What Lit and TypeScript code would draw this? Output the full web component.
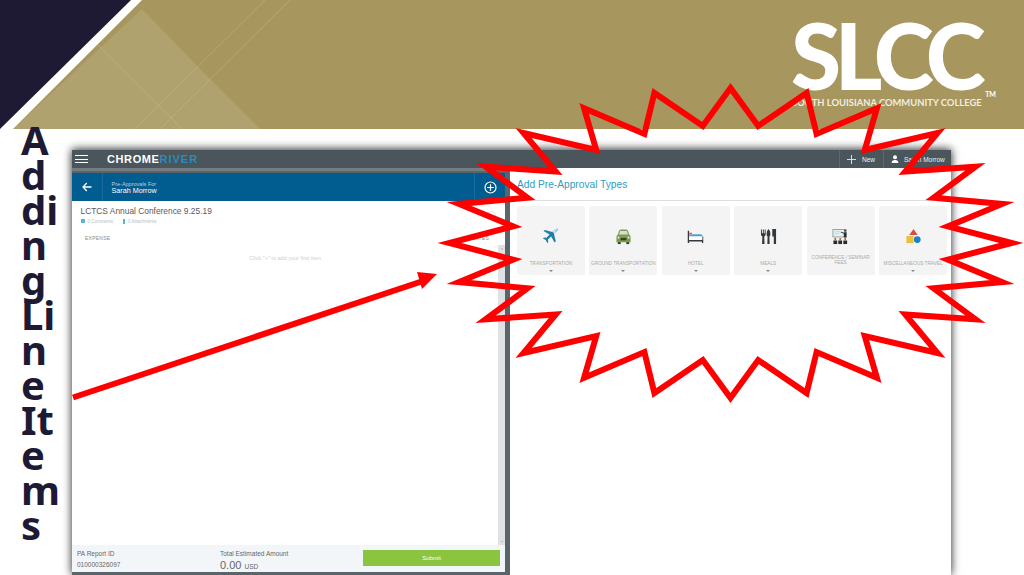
import { LitElement, html, css, svg } from "lit";
import { customElement } from "lit/decorators.js";

const QUARTER: [number, number][] = [
  [0, -160], [27, -113], [78, -155], [84, -105], [151, -140], [130, -89], [215, -115],
  [168, -68], [255, -80], [195, -43], [284, -41], [208, -16], [293, 0],
];

function norm(x: number, y: number): [number, number] {
  const l = Math.hypot(x, y) || 1;
  return [x / l, y / l];
}

function starPoints(): string {
  const cx = 730.5, cy = 243;
  const right = [...QUARTER, ...QUARTER.slice(0, -1).reverse().map(([x, y]) => [x, -y] as [number, number])];
  const left = right.slice(1, -1).reverse().map(([x, y]) => [-x, y] as [number, number]);
  const pts = [...right, ...left].map(([x, y]) => [x + cx, y + cy]);
  const half = 3;
  let cur = pts.map((p) => [...p]);
  for (let k = 0; k < 8; k++) {
    cur = pts.map((p, i) => {
      const c = cur[i];
      const a = cur[(i - 1 + cur.length) % cur.length];
      const b = cur[(i + 1) % cur.length];
      const ua = norm(a[0] - c[0], a[1] - c[1]);
      const ub = norm(b[0] - c[0], b[1] - c[1]);
      const bis = norm(ua[0] + ub[0], ua[1] + ub[1]);
      const cos = ua[0] * ub[0] + ua[1] * ub[1];
      const d = half / Math.sqrt((1 - cos) / 2);
      return [p[0] + bis[0] * d, p[1] + bis[1] * d];
    });
  }
  return cur.map((p) => `${p[0].toFixed(1)},${p[1].toFixed(1)}`).join(" ");
}

const plane = svg`<svg viewBox="0 0 18 18" width="17" height="17">
  <path d="M17 1.2c-1-.8-2.600-.3-3.600.7L11 4.200 3 2 1.600 3.200 8 7 4.800 10.300 2 10 1 11l3 1.600L5.600 16l1-1-.3-2.800L9.700 9l3.600 6.400 1.300-1.300-2-8 2.600-2.600c.9-1 1.800-1.600 1.800-2.300z" fill="#1f7fa8"/>
  <path d="M17 1.200c-.9-.7-2.500-.3-3.600.7L11 4.200l2.600 2 1-3.100z" fill="#cfe3ec"/></svg>`;
const car = svg`<svg viewBox="0 0 18 18" width="17" height="17">
  <rect x="3" y="14" width="3" height="3" fill="#333"/><rect x="12" y="14" width="3" height="3" fill="#333"/>
  <path d="M4 3.500Q4.500 1.500 6.500 1.500h5q2 0 2.500 2l1 3.500q1.500.7 1.500 2.500v5.500H1.500V9.500q0-1.800 1.500-2.500z" fill="#7f9c55"/>
  <path d="M5.200 3.300h7.600l.9 3.500H4.300z" fill="#d4e0d0"/><rect x="6" y="10.500" width="6" height="2.500" fill="#39421f"/>
  <circle cx="3.700" cy="10" r="1" fill="#f3f0d0"/><circle cx="14.300" cy="10" r="1" fill="#f3f0d0"/></svg>`;
const bed = svg`<svg viewBox="0 0 18 18" width="17" height="17">
  <path d="M1.500 3v13M16.500 9v7M1.500 13.500h15" stroke="#33393d" stroke-width="1.400" fill="none"/>
  <rect x="2.300" y="5" width="3" height="2" fill="#e0604c"/>
  <path d="M5 6.500h9.500q2 0 2 2.500H2.300V7.500H5z" fill="#4aa0d8"/><rect x="2.300" y="9" width="14" height="3.600" fill="#fff"/></svg>`;
const meal = svg`<svg viewBox="0 0 18 18" width="17" height="17" fill="#33393d">
  <path d="M1 1.500v5q0 2 1.500 2.500l-.3 8h2.600l-.3-8Q6 8.500 6 6.500v-5H5v4H4v-4H3v4H2v-4z"/>
  <path d="M9 1q2 1.500 2 5 0 2.500-1 3l.2 8H7.800L8 9q-1-.500-1-3 0-3.500 2-5z"/>
  <path d="M13 1h4v16h-2.400V9H13z"/></svg>`;
const conf = svg`<svg viewBox="0 0 18 18" width="17" height="17">
  <rect x="1" y="1.500" width="14" height="8" fill="#e6f1f1" stroke="#7d8c8c" stroke-width=".8"/>
  <path d="M3 4h6M3 6h4" stroke="#b7c6c6" stroke-width=".7"/>
  <circle cx="13.800" cy="3" r="1.100" fill="#3a2a20"/><path d="M12.500 4.500h2.800V10h-2.800zM12.500 5L9.500 4l-.2.700 3.200 1.300z" fill="#2b2b2b"/>
  <g fill="#2b2b2b"><circle cx="3.500" cy="11.700" r="1.100" fill="#a0623a"/><path d="M1.500 13.200h4V17h-4z"/>
  <circle cx="8.700" cy="11.700" r="1.100" fill="#a0623a"/><path d="M6.700 13.200h4V17h-4z"/>
  <circle cx="14" cy="11.700" r="1.100" fill="#a0623a"/><path d="M12 13.200h4V17h-4z"/></g></svg>`;
const shapes = svg`<svg viewBox="0 0 18 18" width="17" height="17">
  <path d="M9 1l4.500 6.500h-9z" fill="#dc4c3e"/><rect x="1.500" y="8.500" width="7.500" height="7.500" fill="#eebd3d"/><circle cx="13" cy="12.300" r="3.600" fill="#1b84c4"/></svg>`;

const CARDS = [
  { icon: plane, label: "TRANSPORTATION", caret: true },
  { icon: car, label: "GROUND TRANSPORTATION", caret: true },
  { icon: bed, label: "HOTEL", caret: true },
  { icon: meal, label: "MEALS", caret: true },
  { icon: conf, label: "CONFERENCE / SEMINAR FEES", caret: false },
  { icon: shapes, label: "MISCELLANEOUS TRAVEL", caret: true },
];

@customElement("app-root")
export class AppRoot extends LitElement {
  static styles = css`
    :host { display: block; position: relative; width: 1024px; height: 575px; overflow: hidden; background: #fff; font-family: "Liberation Sans", Arial, sans-serif; }
    .band { position: relative; height: 129px; background: #a8965f; display: flex; justify-content: flex-end; }
    .band-art { position: absolute; inset: 0; }
    .logo { position: relative; width: 232px; color: #fff; font-family: Lato, sans-serif; font-weight: 900; padding-top: 14px; box-sizing: border-box; }
    .slcc { font-size: 91px; line-height: 82px; letter-spacing: -6.500px; display: flex; margin-left: -1px; }
    .tm { font-size: 7px; line-height: 8px; letter-spacing: 0; align-self: flex-end; margin: 0 0 -2px 6px; font-weight: 700; }
    .college { font-size: 9.400px; line-height: 12px; margin-top: 1px; color: #f1ede0; font-weight: 700; }
    .main { display: flex; align-items: flex-start; height: 446px; }
    .title { position: relative; z-index: 1; width: 38px; margin: -7px 13px 0 21px; font-family: "Noto Sans", sans-serif; font-weight: 700; font-size: 40px; line-height: 35px; color: #1e1a34; word-break: break-all; }
    .win { width: 879px; height: 425px; margin-top: 21px; display: flex; flex-direction: column; background: #59656b; box-shadow: 0 -1px 9px rgba(0,0,0,.55), 0 0 8px rgba(0,0,0,.45); }
    .topbar { height: 18px; background: #4a555c; display: flex; align-items: center; color: #f0f0f0; font-size: 6.500px; flex: none; }
    .ham { width: 13px; height: 8px; margin-left: 3px; border-top: 1px solid #fff; border-bottom: 1px solid #fff; position: relative; box-sizing: border-box; }
    .ham::after { content: ""; position: absolute; left: 0; right: 0; top: 2.500px; height: 1px; background: #fff; }
    .brand { margin-left: 19px; font-size: 11px; font-weight: 700; letter-spacing: .600px; color: #fff; flex: 1; }
    .brand span { color: #2a8cba; letter-spacing: 1px; }
    .tb-item { height: 18px; display: flex; align-items: center; border-left: 1px solid #5c686e; box-sizing: border-box; }
    .tb-new { width: 44px; padding-left: 7px; gap: 6px; }
    .tb-user { width: 68px; padding-left: 7px; gap: 5px; }
    .panes { flex: 1; display: flex; min-height: 0; }
    .left { width: 433px; display: flex; flex-direction: column; padding-top: 2px; border-top: 3px solid #757d82; box-sizing: border-box; }
    .bluebar { height: 28px; background: #015c8f; display: flex; align-items: center; color: #fff; flex: none; }
    .back { width: 31px; height: 28px; display: flex; align-items: center; justify-content: center; border-right: 1px solid #1a6d9b; box-sizing: border-box; }
    .who { flex: 1; padding-left: 8.500px; }
    .who small { display: block; font-size: 5.500px; line-height: 6px; color: #b9d2e0; }
    .who b { display: block; font-size: 7.200px; line-height: 7px; font-weight: 400; }
    .addbtn { width: 31px; height: 28px; display: flex; align-items: center; justify-content: center; border-left: 1px solid #1a6d9b; box-sizing: border-box; }
    .leftbody { flex: 1; display: flex; min-height: 0; background: #fff; }
    .report { width: 426px; position: relative; padding: 4px 0 0 8.500px; box-sizing: border-box; }
    .rep-title { font-size: 8.400px; line-height: 12px; color: #5a5a5a; }
    .meta { display: flex; align-items: center; gap: 3px; font-size: 4.500px; color: #b5c0c4; margin-top: 1px; height: 6px; }
    .meta i { display: block; width: 4px; height: 4px; background: #5ab6d4; }
    .meta i.clip { width: 2px; margin-left: 7px; height: 5px; }
    .cols { display: flex; justify-content: space-between; padding: 0 9px 0 4.500px; margin-top: 11px; font-size: 5px; line-height: 6px; color: #8a8a8a; letter-spacing: .250px; }
    .ring { position: absolute; right: 2.500px; top: 9.500px; width: 9px; height: 9px; border: 1px solid #ddd; border-radius: 50%; box-sizing: border-box; }
    .empty { text-align: center; font-size: 5.500px; line-height: 7px; color: #d0d0d0; margin: 14px 0 0 -8px; }
    .scroll { width: 7px; margin-top: 44px; background: #dfe1e2; display: flex; flex-direction: column; justify-content: space-between; align-items: center; color: #888; font-size: 5px; padding: 2px 0; box-sizing: border-box; }
    .foot { height: 27px; background: #f3f6f9; flex: none; display: flex; color: #666; font-size: 6.500px; position: relative; }
    .f1 { width: 148px; padding: 4.500px 0 0 5px; box-sizing: border-box; line-height: 8px; }
    .f1 div + div { margin-top: 3px; }
    .f2 { width: 143px; padding-top: 4.500px; line-height: 8px; box-sizing: border-box; }
    .amount { font-size: 11px; line-height: 11px; margin-top: 2px; }
    .amount small { font-size: 6.500px; }
    .submit { width: 137px; height: 16px; margin-top: 5px; background: #8bc43f; color: #fff; font-size: 6px; display: flex; align-items: center; justify-content: center; }
    .footgap { height: 3px; flex: none; }
    .right { width: 441px; margin-left: 5px; background: #fff; box-sizing: border-box; padding: 0 4px 0 7px; }
    .pane-h { height: 33px; display: flex; align-items: center; font-size: 10.200px; color: #2f9cc2; border-bottom: 1px solid #dedede; margin-right: -4px; box-sizing: border-box; }
    .grid { display: grid; grid-template-columns: repeat(6, 1fr); gap: 4.500px; margin-top: 5px; }
    .card { height: 69px; background: #f4f4f4; border-radius: 2px; display: flex; flex-direction: column; align-items: center; position: relative; }
    .icon { height: 17px; margin-top: 22px; display: flex; }
    .lbl { position: absolute; left: 0; right: 0; top: 55px; text-align: center; font-size: 4.700px; line-height: 5px; color: #aaa; white-space: nowrap; }
    .lbl.two { top: 50px; white-space: normal; line-height: 4.700px; }
    .caret { position: absolute; left: 50%; top: 64px; margin-left: -2px; border: 2px solid transparent; border-top: 2px solid #888; border-bottom: 0; }
    .overlay { position: absolute; inset: 0; z-index: 2; pointer-events: none; }
  `;

  render() {
    return html`
      <div class="band">
        <svg class="band-art" width="1024" height="129" viewBox="0 0 1024 129">
          <polygon points="142,9 197,66 260,129 13,129" fill="#b0a26f"/>
          <g stroke="#c3b78e" stroke-width="1" fill="none" opacity=".55">
            <path d="M98 45L182 129M265 0L135 129M290 0L160 129"/>
          </g>
          <polygon points="0,0 142,0 13,129 0,129" fill="#fff"/>
          <polygon points="0,0 131,0 0,129" fill="#1e1a34"/>
        </svg>
        <div class="logo">
          <div class="slcc"><span>SLCC</span><span class="tm">TM</span></div>
          <div class="college">SOUTH LOUISIANA COMMUNITY COLLEGE</div>
        </div>
      </div>
      <div class="main">
        <div class="title">Adding Line Items</div>
        <div class="win">
          <div class="topbar">
            <div class="ham"></div>
            <div class="brand">CHROME<span>RIVER</span></div>
            <div class="tb-item tb-new">
              <svg width="9" height="9" viewBox="0 0 9 9"><path d="M4.500 0v9M0 4.500h9" stroke="#ddd" stroke-width="1"/></svg>
              <span>New</span>
            </div>
            <div class="tb-item tb-user">
              <svg width="8" height="8" viewBox="0 0 8 8"><circle cx="4" cy="2.200" r="2" fill="#fff"/><path d="M0.500 8q0-2.500 2.500-3h2q2.500.5 2.500 3z" fill="#fff"/></svg>
              <span>Sarah Morrow</span>
            </div>
          </div>
          <div class="panes">
            <div class="left">
              <div class="bluebar">
                <div class="back"><svg width="10" height="10" viewBox="0 0 10 10"><path d="M9.500 5H1M4.800 1L1 5l3.800 4" fill="none" stroke="#fff" stroke-width="1.300"/></svg></div>
                <div class="who"><small>Pre-Approvals For</small><b>Sarah Morrow</b></div>
                <div class="addbtn"><svg width="13" height="13" viewBox="0 0 13 13"><circle cx="6.500" cy="6.500" r="5.500" fill="none" stroke="#fff" stroke-width="1.200"/><path d="M6.500 3.200v6.600M3.200 6.500h6.600" stroke="#fff" stroke-width="1.200"/></svg></div>
              </div>
              <div class="leftbody">
                <div class="report">
                  <div class="rep-title">LCTCS Annual Conference 9.25.19</div>
                  <div class="meta"><i></i><span>0 Comments</span><i class="clip"></i><span>0 Attachments</span></div>
                  <div class="cols"><span>EXPENSE</span><span>DATES</span></div>
                  <div class="ring"></div>
                  <div class="empty">Click "+" to add your first item</div>
                </div>
                <div class="scroll"><span>⌃</span><span>⌄</span></div>
              </div>
              <div class="foot">
                <div class="f1"><div>PA Report ID</div><div>010000326097</div></div>
                <div class="f2"><div>Total Estimated Amount</div><div class="amount">0.00 <small>USD</small></div></div>
                <div class="submit">Submit</div>
              </div>
              <div class="footgap"></div>
            </div>
            <div class="right">
              <div class="pane-h">Add Pre-Approval Types</div>
              <div class="grid">
                ${CARDS.map((c) => html`
                  <div class="card">
                    <div class="icon">${c.icon}</div>
                    <div class="lbl ${c.caret ? "" : "two"}">${c.label}</div>
                    ${c.caret ? html`<div class="caret"></div>` : ""}
                  </div>`)}
              </div>
            </div>
          </div>
        </div>
      </div>
      <svg class="overlay" width="1024" height="575" viewBox="0 0 1024 575">
        <polygon points=${starPoints()} fill="none" stroke="#ff0000" stroke-width="6" stroke-miterlimit="30"/>
        <path d="M73 397.500L426 280" stroke="#ff0000" stroke-width="6" fill="none"/>
        <polygon points="437,274 417,272 422,289" fill="#ff0000"/>
      </svg>
    `;
  }
}
